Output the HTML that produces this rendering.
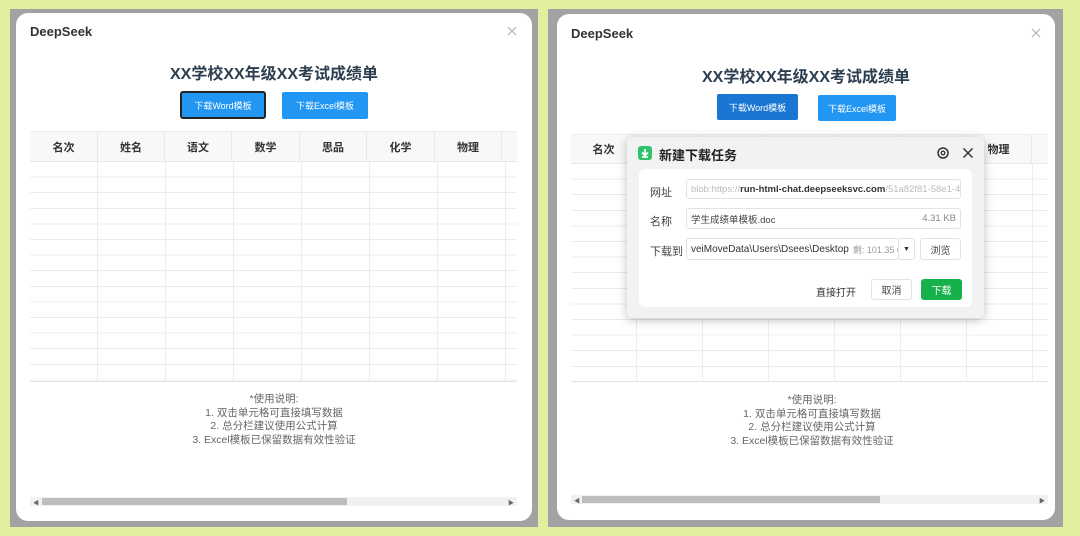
<!DOCTYPE html>
<html><head><meta charset="utf-8"><style>
*{margin:0;padding:0;box-sizing:border-box}
body{width:1080px;height:536px;background:#e3ef9e;position:relative;overflow:hidden;font-family:"Liberation Sans","Noto Sans CJK SC",sans-serif}
.abs{position:absolute}
.frame{position:absolute;background:#a2a2a2}
.card{position:absolute;background:#fff;border-radius:12px}
.brand{position:absolute;font-size:13px;font-weight:bold;color:#333}
.title{position:absolute;font-size:16px;font-weight:bold;color:#2c3e50;text-align:center;white-space:nowrap}
.btn{position:absolute;color:#fff;font-size:9px;text-align:center;border-radius:2px;display:flex;align-items:center;justify-content:center}
.thead{position:absolute;background:#f7f8fa;border-top:1px solid #eee;border-bottom:1px solid #e8e8e8;display:flex;overflow:hidden}
.thead div{flex:none;border-right:1px solid #e8e8e8;font-size:11px;font-weight:bold;color:#333;display:flex;align-items:center;justify-content:center}
.tbody{position:absolute;border-bottom:1px solid #e2e2e2}
.notes{position:absolute;font-size:10.5px;color:#666;text-align:center;line-height:13.5px;white-space:nowrap}
.sb{position:absolute;background:#f1f1f1;height:9px}
.sb .t{position:absolute;top:1px;height:7px;background:#bdbdbd}
.sb .a{position:absolute;top:1px;font-size:6px;color:#666}
.lbl{position:absolute;font-size:11px;color:#444}
.inp{position:absolute;background:#fff;border:1px solid #e3e3e3;border-radius:3px;font-size:9.5px;color:#444;display:flex;align-items:center;padding-left:4px;white-space:nowrap;overflow:hidden}
</style></head><body>

<!-- LEFT -->
<div class="frame" style="left:10px;top:9px;width:528px;height:518px"></div>
<div class="card" style="left:16px;top:13px;width:516px;height:508px"></div>
<div class="brand" style="left:30px;top:24px">DeepSeek</div>
<svg class="abs" style="left:507px;top:26px" width="10" height="10" viewBox="0 0 10 10"><path d="M1 1l8 8M9 1l-8 8" stroke="#aaa" stroke-width="1"/></svg>
<div class="title" style="left:16px;width:516px;top:60px">XX学校XX年级XX考试成绩单</div>
<div class="btn" style="left:180px;top:91px;width:86px;height:28px;background:#2196f3;border:2px solid #222;border-radius:3px">下载Word模板</div>
<div class="btn" style="left:282px;top:92px;width:86px;height:27px;background:#2196f3">下载Excel模板</div>
<div class="thead" style="left:30px;top:131px;width:487px;height:31px">
<div style="width:68px">名次</div><div style="width:67px">姓名</div><div style="width:67px">语文</div><div style="width:68px">数学</div><div style="width:67px">思品</div><div style="width:68px">化学</div><div style="width:67px">物理</div><div style="width:67px"></div></div>
<div class="tbody" style="left:30px;top:162px;width:487px;height:220px;background:
repeating-linear-gradient(to bottom,transparent 0,transparent 14.6px,#ececec 14.6px,#ececec 15.6px),
repeating-linear-gradient(to right,transparent 0,transparent 67px,#ececec 67px,#ececec 68px)"></div>
<div class="notes" style="left:16px;width:516px;top:393px">*使用说明:<br>1. 双击单元格可直接填写数据<br>2. 总分栏建议使用公式计算<br>3. Excel模板已保留数据有效性验证</div>
<div class="sb" style="left:30px;top:497px;width:487px"><span class="a" style="left:3px">◀</span><div class="t" style="left:12px;width:305px"></div><span class="a" style="right:3px">▶</span></div>

<!-- RIGHT -->
<div class="frame" style="left:548px;top:9px;width:515px;height:518px"></div>
<div class="card" style="left:557px;top:14px;width:498px;height:506px"></div>
<div class="brand" style="left:571px;top:26px">DeepSeek</div>
<svg class="abs" style="left:1031px;top:28px" width="10" height="10" viewBox="0 0 10 10"><path d="M1 1l8 8M9 1l-8 8" stroke="#aaa" stroke-width="1"/></svg>
<div class="title" style="left:557px;width:498px;top:63px">XX学校XX年级XX考试成绩单</div>
<div class="btn" style="left:717px;top:94px;width:81px;height:26px;background:#1976d2">下载Word模板</div>
<div class="btn" style="left:818px;top:95px;width:78px;height:26px;background:#2196f3">下载Excel模板</div>
<div class="thead" style="left:571px;top:134px;width:477px;height:30px">
<div style="width:66px">名次</div><div style="width:66px"></div><div style="width:65px"></div><div style="width:66px"></div><div style="width:66px"></div><div style="width:66px"></div><div style="width:66px">物理</div><div style="width:66px"></div></div>
<div class="tbody" style="left:571px;top:164px;width:477px;height:218px;background:
repeating-linear-gradient(to bottom,transparent 0,transparent 14.6px,#ececec 14.6px,#ececec 15.6px),
repeating-linear-gradient(to right,transparent 0,transparent 65px,#ececec 65px,#ececec 66px)"></div>
<div class="notes" style="left:557px;width:510px;top:394px">*使用说明:<br>1. 双击单元格可直接填写数据<br>2. 总分栏建议使用公式计算<br>3. Excel模板已保留数据有效性验证</div>
<div class="sb" style="left:571px;top:495px;width:477px"><span class="a" style="left:3px">◀</span><div class="t" style="left:11px;width:298px"></div><span class="a" style="right:3px">▶</span></div>

<!-- dialog -->
<div class="abs" style="left:627px;top:137px;width:357px;height:181px;background:#f2f2f2;border-radius:6px;box-shadow:0 2px 10px rgba(0,0,0,0.25)"></div>
<div class="abs" style="left:638px;top:146px;width:14px;height:14px;background:#2cc36b;border-radius:3px"></div>
<svg class="abs" style="left:638px;top:146px" width="14" height="14" viewBox="0 0 14 14"><path d="M7 3v6M4 6.5l3 3 3-3M4 11h6" stroke="#fff" stroke-width="1.8" fill="none"/></svg>
<div class="abs" style="left:659px;top:145px;font-size:13px;font-weight:bold;color:#222">新建下载任务</div>
<svg class="abs" style="left:936px;top:146px" width="14" height="14" viewBox="0 0 14 14"><circle cx="7" cy="7" r="5" stroke="#333" stroke-width="1.5" fill="none"/><circle cx="7" cy="7" r="1.8" stroke="#333" stroke-width="1.3" fill="none"/></svg>
<svg class="abs" style="left:962px;top:147px" width="12" height="12" viewBox="0 0 12 12"><path d="M1.5 1.5l9 9M10.5 1.5l-9 9" stroke="#333" stroke-width="1.5"/></svg>
<div class="abs" style="left:639px;top:169px;width:333px;height:138px;background:#fff;border-radius:6px"></div>
<div class="lbl" style="left:650px;top:184px">网址</div>
<div class="inp" style="left:686px;top:179px;width:275px;height:20px;color:#bbb">blob:https://<b style="color:#333;font-weight:bold">run-html-chat.deepseeksvc.com</b>/51a82f81-58e1-41ff-81</div>
<div class="lbl" style="left:650px;top:213px">名称</div>
<div class="inp" style="left:686px;top:208px;width:275px;height:21px">学生成绩单模板.doc<span style="position:absolute;right:4px;color:#888">4.31 KB</span></div>
<div class="lbl" style="left:650px;top:243px">下载到</div>
<div class="inp" style="left:686px;top:238px;width:213px;height:22px;font-size:10px;color:#333">veiMoveData\Users\Dsees\Desktop <span style="color:#999;font-size:9px;margin-left:4px">剩: 101.35 GB</span></div>
<div class="inp" style="left:898px;top:238px;width:17px;height:22px;padding:0;justify-content:center;font-size:7px;color:#333">▼</div>
<div class="inp" style="left:920px;top:238px;width:41px;height:22px;padding:0;justify-content:center;font-size:10px">浏览</div>
<div class="abs" style="left:816px;top:284px;font-size:10px;color:#333">直接打开</div>
<div class="inp" style="left:871px;top:279px;width:41px;height:21px;padding:0;justify-content:center;font-size:10px">取消</div>
<div class="abs" style="left:921px;top:279px;width:41px;height:21px;background:#17b14c;border-radius:3px;color:#fff;font-size:10px;display:flex;align-items:center;justify-content:center">下载</div>
</body></html>
